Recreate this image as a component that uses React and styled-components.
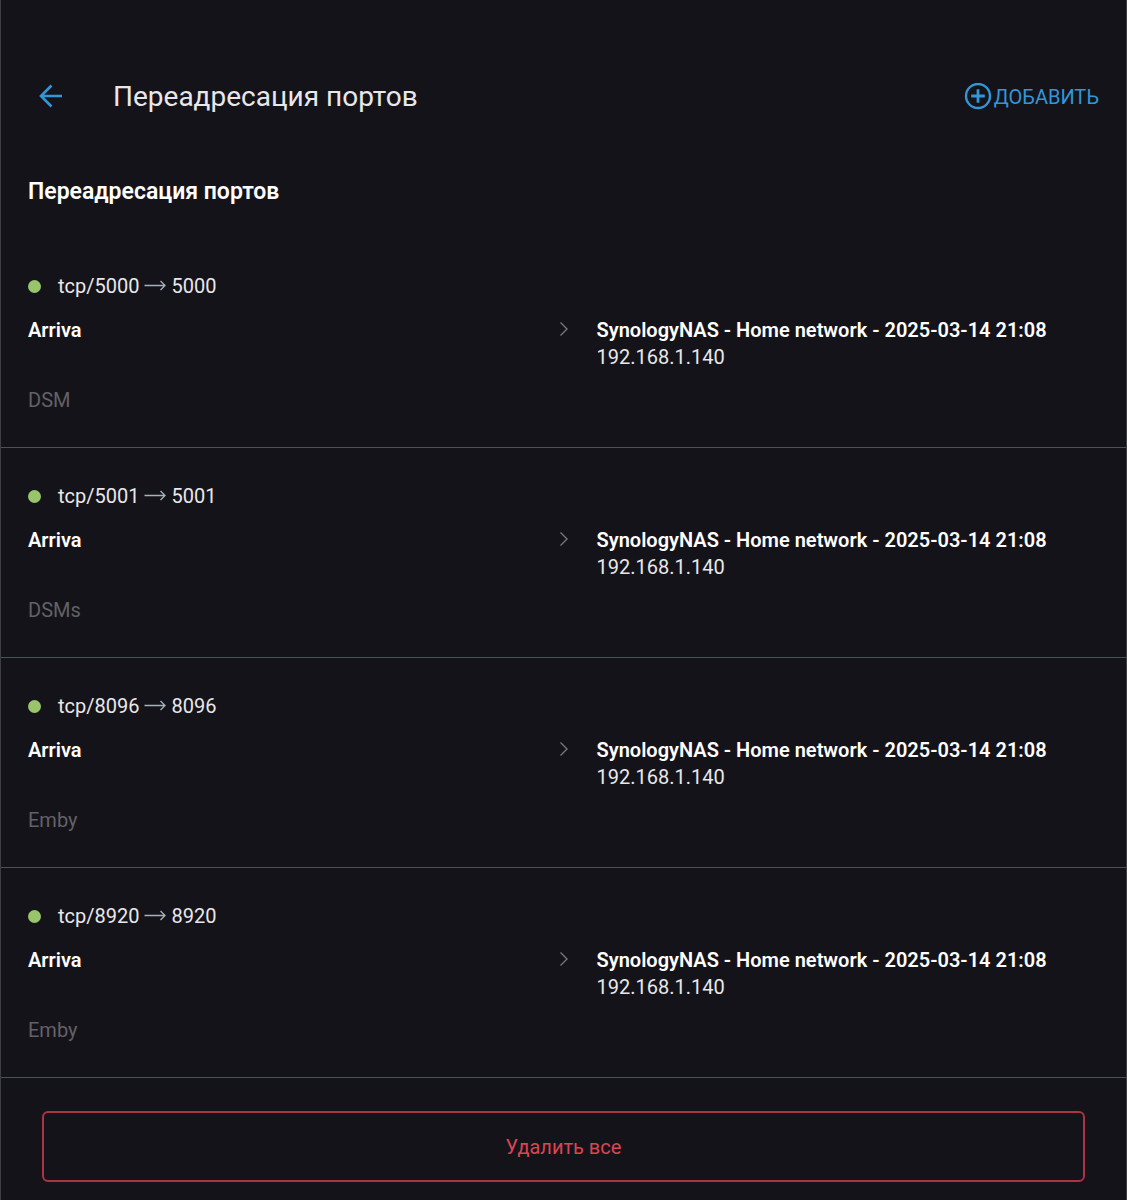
import React from "react";
import styled, { createGlobalStyle } from "styled-components";

const rules = [
    { id: 1, protocol: "tcp", from: "5000", to: "5000", note: "DSM" },
    { id: 2, protocol: "tcp", from: "5001", to: "5001", note: "DSMs" },
    { id: 3, protocol: "tcp", from: "8096", to: "8096", note: "Emby" },
    { id: 4, protocol: "tcp", from: "8920", to: "8920", note: "Emby" },
];

const GlobalStyle = createGlobalStyle`
    * {
        box-sizing: border-box;
    }

    body {
        margin: 0;
        background: #15131a;
        color: #e8e8ea;
        font-family: Roboto, "Liberation Sans", sans-serif;
        font-size: 20px;
    }

    button {
        font: inherit;
        cursor: pointer;
    }
`;

const Page = styled.div`
    min-height: 100vh;
    border: solid #3f3e44;
    border-width: 0 1px;
    padding-top: 65px;
`;

const Header = styled.header`
    display: flex;
    align-items: center;
    height: 64px;
    padding: 0 27px 0 35px;
`;

const HeaderButton = styled.button`
    display: flex;
    align-items: center;
    gap: 2px;
    padding: 0;
    border: 0;
    background: none;
    color: #3296d7;
`;

const Title = styled.h1`
    flex: 1;
    margin: 0 0 0 47px;
    font-size: 28px;
    font-weight: 400;
    line-height: 36px;
`;

const SectionTitle = styled.h2`
    margin: 47px 27px 30px;
    color: #fff;
    font-size: 23px;
    font-weight: 600;
    line-height: 32px;
`;

const RuleList = styled.ul`
    margin: 0;
    padding: 0;
    list-style: none;
`;

const RuleItem = styled.li`
    padding: 36px 27px 33px;
    border-bottom: 1px solid #46545a;
`;

const Ports = styled.div`
    display: flex;
    align-items: center;
    gap: 5px;
    line-height: 24px;
`;

const Status = styled.span`
    width: 13px;
    height: 13px;
    margin-right: 12px;
    border-radius: 50%;
    background: #98c46c;
`;

const Route = styled.div`
    display: grid;
    grid-template-columns: 1fr 10px 1fr;
    column-gap: 28px;
    margin: 19px 0 16px;
    line-height: 27px;
`;

const Name = styled.div`
    color: #fff;
    font-weight: 600;
`;

const ChevronBox = styled.div`
    display: flex;
    align-items: center;
    height: 24px;
`;

const Note = styled.div`
    color: #626165;
    line-height: 27px;
`;

const Footer = styled.footer`
    padding: 33px 41px 18px;
`;

const DeleteButton = styled.button`
    width: 100%;
    height: 71px;
    border: 2px solid #a83541;
    border-radius: 6px;
    background: none;
    color: #dc4453;
`;

const BackIcon = () => (
    <svg width="30" height="30" viewBox="0 0 30 30" fill="none" stroke="currentColor" strokeWidth="2.6" aria-hidden="true">
        <path d="M26 14H5.5M15.5 3.5L5 14L15.5 24.5" />
    </svg>
);

const AddIcon = () => (
    <svg width="28" height="28" viewBox="0 0 28 28" fill="none" stroke="currentColor" aria-hidden="true">
        <circle cx="14" cy="13" r="12" strokeWidth="2.4" />
        <path d="M14 6.2V19.8M7.2 13H20.8" strokeWidth="2.8" />
    </svg>
);

const LongArrow = () => (
    <svg width="22" height="12" viewBox="0 0 22 12" fill="none" stroke="#a3b3b9" strokeWidth="1.3" aria-hidden="true">
        <path d="M0.5 5.5H21M16.5 1L21 5.5L16.5 10" />
    </svg>
);

const Chevron = () => (
    <svg width="10" height="16" viewBox="0 0 10 16" fill="none" stroke="#77767a" strokeWidth="1.4" aria-hidden="true">
        <path d="M1.5 1.5L8 8L1.5 14.5" />
    </svg>
);

const Rule = ({ rule }) => (
    <RuleItem>
        <Ports>
            <Status />
            <span>{rule.protocol}/{rule.from}</span>
            <LongArrow />
            <span>{rule.to}</span>
        </Ports>
        <Route>
            <Name>Arriva</Name>
            <ChevronBox><Chevron /></ChevronBox>
            <div>
                <Name>SynologyNAS - Home network - 2025-03-14 21:08</Name>
                <div>192.168.1.140</div>
            </div>
        </Route>
        <Note>{rule.note}</Note>
    </RuleItem>
);

const App = () => (
    <>
        <GlobalStyle />
        <Page>
            <Header>
                <HeaderButton type="button" aria-label="Назад">
                    <BackIcon />
                </HeaderButton>
                <Title>Переадресация портов</Title>
                <HeaderButton type="button">
                    <AddIcon />
                    ДОБАВИТЬ
                </HeaderButton>
            </Header>
            <SectionTitle>Переадресация портов</SectionTitle>
            <RuleList>
                {rules.map((rule) => <Rule key={rule.id} rule={rule} />)}
            </RuleList>
            <Footer>
                <DeleteButton type="button">Удалить все</DeleteButton>
            </Footer>
        </Page>
    </>
);

export default App;
